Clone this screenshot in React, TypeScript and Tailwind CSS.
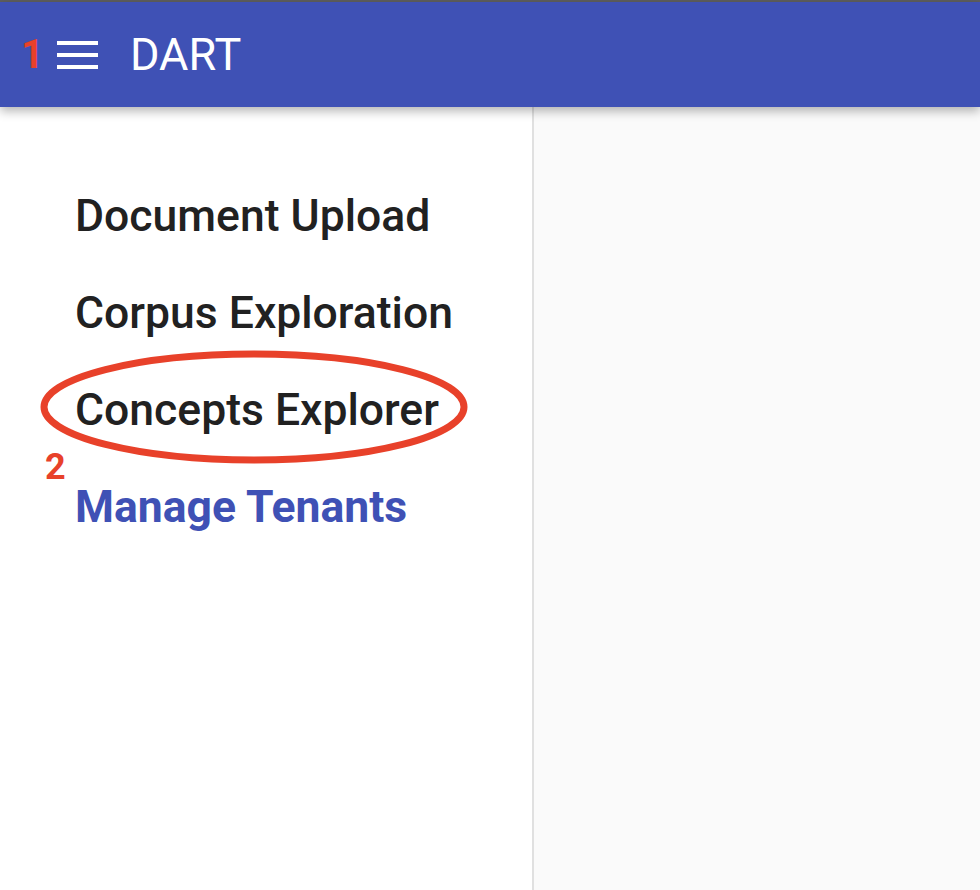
import React from "react";

export default function App() {
  const items = ["Document Upload", "Corpus Exploration", "Concepts Explorer"];
  return (
    <div className="w-[980px] h-[890px] flex flex-col bg-white overflow-hidden" style={{ fontFamily: "Roboto, 'Liberation Sans', sans-serif" }}>
      <div className="h-[2px] bg-[#5f5f5f] shrink-0" />
      <header className="relative z-10 h-[105px] shrink-0 bg-[#3f51b5] flex items-center shadow-[0_4px_10px_rgba(0,0,0,0.3)]">
        <span className="ml-[21px] w-[18px] text-[#e8412a] font-bold text-[40px] leading-none">1</span>
        <svg className="ml-[18px]" width="42" height="30" viewBox="0 0 42 30">
          <rect x="0" y="1" width="41" height="4" fill="white" />
          <rect x="0" y="13" width="41" height="4" fill="white" />
          <rect x="0" y="25" width="41" height="4" fill="white" />
        </svg>
        <span className="ml-[31px] text-white text-[45px] leading-none">DART</span>
      </header>
      <div className="flex flex-1 min-h-0">
        <nav className="w-[534px] shrink-0 border-r-2 border-[#e0e0e0] bg-white pt-[77px] pl-[75px] flex flex-col">
          {items.map((t, i) => (
            <div key={t} className="relative h-[97px] flex items-start">
              <span className="text-[#212121] text-[44.5px] font-medium leading-[64px] whitespace-nowrap">{t}</span>
              {i === 2 && (
                <>
                  <svg className="absolute left-[-39px] top-[-32px]" width="436" height="122" viewBox="0 0 436 122">
                    <ellipse cx="218" cy="61" rx="210" ry="53" fill="none" stroke="#e8412a" strokeWidth="7" />
                  </svg>
                  <span className="absolute left-[-30px] top-[71px] text-[#e8412a] font-bold text-[36px] leading-none">2</span>
                </>
              )}
            </div>
          ))}
          <div className="h-[97px]">
            <span className="text-[#3f51b5] text-[44.5px] font-bold leading-[64px] whitespace-nowrap">Manage Tenants</span>
          </div>
        </nav>
        <main className="flex-1 bg-[#fafafa]" />
      </div>
    </div>
  );
}
